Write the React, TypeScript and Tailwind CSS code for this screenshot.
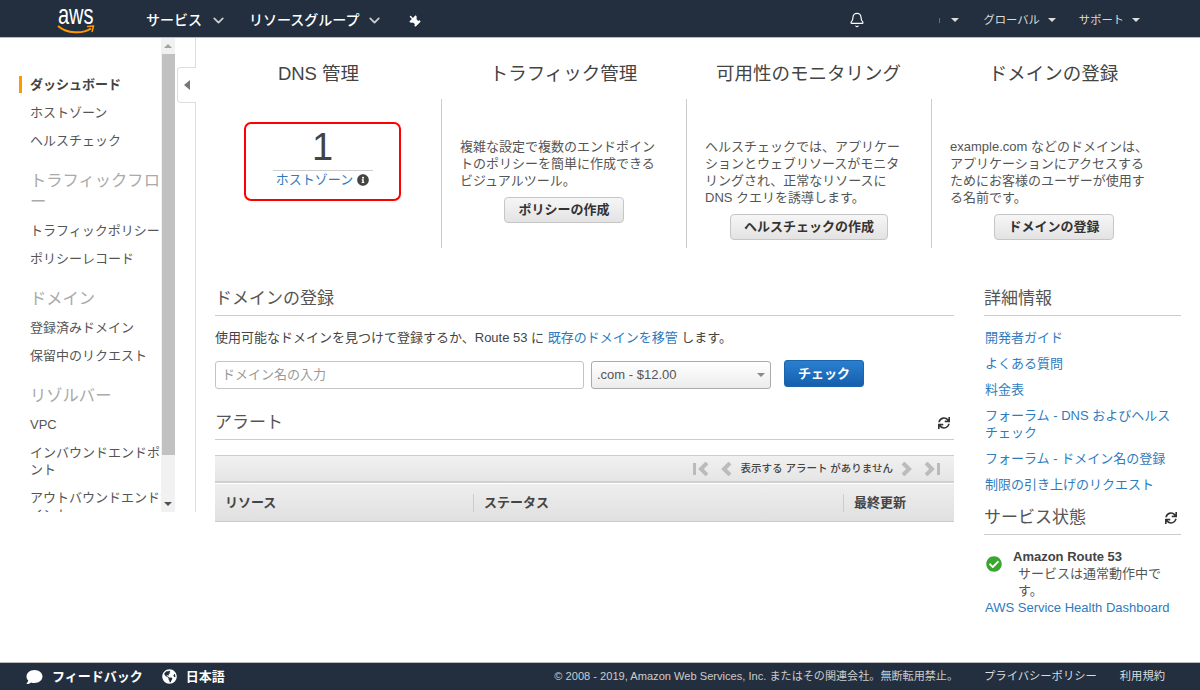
import { Bell, ChevronDown } from "lucide-react";
import {
  FaCheckCircle,
  FaComment,
  FaGlobeAmericas,
  FaInfoCircle,
  FaSync,
  FaThumbtack,
} from "react-icons/fa";

const fontStack = "font-['Liberation_Sans','Noto_Sans_CJK_JP',sans-serif]";

function Caret({ className }: { className: string }) {
  return <span className={`h-0 w-0 border-x-[4px] border-t-[4px] border-x-transparent ${className}`} />;
}

function NavItem({ label, active }: { label: string; active?: boolean }) {
  return (
    <div className="w-[154px] pt-[5px] pb-[6px] text-[13px] leading-[17px] [line-break:anywhere]">
      <div className={active ? "border-l-[3px] border-[#ff9900] pl-[8px] font-bold text-[#444]" : "pl-[11px] text-[#555]"}>
        {label}
      </div>
    </div>
  );
}

function NavHeading({ label }: { label: string }) {
  return (
    <div className="mt-[15px] mb-[5px] w-[154px] pl-[11px] text-[16.3px] leading-[21px] text-[#aaa] [line-break:anywhere]">
      {label}
    </div>
  );
}

function Sidebar() {
  return (
    <aside className="relative flex h-[474px] w-[196px] shrink-0 border-r border-[#ddd]">
      <nav className="h-full w-[161px] shrink-0 overflow-hidden pt-[33px] pl-[19px]">
        <NavItem label="ダッシュボード" active />
        <NavItem label="ホストゾーン" />
        <NavItem label="ヘルスチェック" />
        <NavHeading label="トラフィックフロー" />
        <NavItem label="トラフィックポリシー" />
        <NavItem label="ポリシーレコード" />
        <NavHeading label="ドメイン" />
        <NavItem label="登録済みドメイン" />
        <NavItem label="保留中のリクエスト" />
        <NavHeading label="リゾルバー" />
        <NavItem label="VPC" />
        <NavItem label="インバウンドエンドポイント" />
        <NavItem label="アウトバウンドエンドポイント" />
      </nav>
      {/* scrollbar */}
      <div className="flex h-full w-[14px] shrink-0 flex-col items-center bg-[#f1f1f1]">
        <div className="flex h-[16px] items-center justify-center">
          <span className="h-0 w-0 border-x-[4px] border-b-[4px] border-x-transparent border-b-[#a3a3a3]" />
        </div>
        <div className="h-[401px] w-[13px] bg-[#c1c1c1]" />
        <div className="flex flex-1 items-end pb-[6px]">
          <Caret className="border-t-[#505050]" />
        </div>
      </div>
      {/* collapse tab */}
      <div className="absolute top-[29px] left-[177px] flex h-[36px] w-[19px] items-center justify-center rounded-l-[4px] border border-r-0 border-[#ddd] bg-white">
        <span className="h-0 w-0 border-y-[5px] border-r-[6px] border-y-transparent border-r-[#777]" />
      </div>
    </aside>
  );
}

function GrayButton({ label }: { label: string }) {
  return (
    <button className="h-[26px] rounded-[4px] border border-[#c6c6c6] bg-gradient-to-b from-[#f6f6f6] to-[#e3e3e3] px-[13px] text-[13px] leading-[24px] font-bold text-[#333]">
      {label}
    </button>
  );
}

function FeatureColumn({ title, lines, button }: { title: string; lines: string[]; button: string }) {
  return (
    <div className="flex flex-col">
      <h2 className="flex h-[61px] items-center justify-center pt-[11px] text-[18.5px] font-normal text-[#444]">{title}</h2>
      <div className="flex h-[149px] flex-col border-l border-[#ccc] pt-[39px]">
        <p className="pl-[18px] text-[13px] leading-[17px] text-[#555]">
          {lines.map((line) => (
            <span key={line} className="block whitespace-nowrap">
              {line}
            </span>
          ))}
        </p>
        <div className="mt-[8px] flex justify-center">
          <GrayButton label={button} />
        </div>
      </div>
    </div>
  );
}

function SectionTitle({ title, refresh }: { title: string; refresh?: boolean }) {
  return (
    <div className="flex h-[29px] items-center justify-between border-b border-[#ccc] pb-[5px]">
      <h3 className="text-[17px] leading-[20px] font-normal text-[#555]">{title}</h3>
      {refresh && <FaSync className="mr-[4px] h-[12px] w-[12px] text-[#333]" />}
    </div>
  );
}

function Pager({ flip }: { flip?: boolean }) {
  return (
    <div className={`flex items-center gap-[12px] ${flip ? "flex-row-reverse" : ""}`}>
      <svg width="16" height="14" viewBox="0 0 16 14" className={flip ? "-scale-x-100" : ""}>
        <rect x="1" y="1" width="3" height="12" fill="#bbb" />
        <path d="M15 1 L9 7 L15 13" fill="none" stroke="#bbb" strokeWidth="4" />
      </svg>
      <svg width="12" height="14" viewBox="0 0 12 14" className={flip ? "-scale-x-100" : ""}>
        <path d="M10 1 L4 7 L10 13" fill="none" stroke="#bbb" strokeWidth="4" />
      </svg>
    </div>
  );
}

const links = [
  "開発者ガイド",
  "よくある質問",
  "料金表",
  "フォーラム - DNS およびヘルスチェック",
  "フォーラム - ドメイン名の登録",
  "制限の引き上げのリクエスト",
];

export default function App() {
  return (
    <div className={`flex h-[690px] w-[1200px] flex-col overflow-hidden bg-white ${fontStack}`}>
      {/* Top bar */}
      <header className="flex h-[38px] shrink-0 items-center border-b border-[#bbb] bg-[#232f3e] pt-[3px] text-white">
        <div className="relative ml-[57px] h-[34px] w-[38px]">
          <span className="absolute top-0 left-[1px] origin-center scale-y-[1.35] text-[20px] leading-[24px] text-white">aws</span>
          <svg width="38" height="10" viewBox="0 0 38 10" className="absolute top-[21px] left-0">
            <path d="M1 2 C10 10 26 10 34 4.5" fill="none" stroke="#ff9900" strokeWidth="2" />
            <path d="M30 2.5 L36.5 2 L35 8" fill="none" stroke="#ff9900" strokeWidth="1.5" />
          </svg>
        </div>
        <span className="ml-[51px] text-[14px] font-medium">サービス</span>
        <ChevronDown className="ml-[8px] h-[17px] w-[17px] text-[#ccc]" strokeWidth={2.5} />
        <span className="ml-[22px] text-[14px] font-medium">リソースグループ</span>
        <ChevronDown className="ml-[7px] h-[17px] w-[17px] text-[#ccc]" strokeWidth={2.5} />
        <FaThumbtack className="ml-[25px] h-[12px] w-[12px] rotate-[135deg] text-white" />
        <Bell className="ml-[429px] h-[16px] w-[16px] text-white" strokeWidth={1.75} />
        <span className="ml-[74px] h-[5px] w-px bg-[#8a6a3f]" />
        <Caret className="ml-[11px] border-t-[#ddd]" />
        <span className="ml-[24px] text-[11.3px] text-[#ddd]">グローバル</span>
        <Caret className="ml-[8px] border-t-[#ddd]" />
        <span className="ml-[23px] text-[11.3px] text-[#ddd]">サポート</span>
        <Caret className="ml-[8px] border-t-[#ddd]" />
      </header>

      <div className="flex flex-1 items-start">
        <Sidebar />

        <main className="min-w-0 flex-1">
          {/* Feature columns */}
          <div className="grid w-[980px] grid-cols-4">
            <div className="flex flex-col">
              <h2 className="flex h-[61px] items-center justify-center pt-[11px] text-[18.5px] font-normal text-[#444]">DNS 管理</h2>
              <div className="mt-[23px] ml-[48px] flex h-[79px] w-[157px] flex-col items-center rounded-[7px] border-2 border-[#f00]">
                <div className="h-[47px] w-[100px] border-b border-[#ccc] text-center text-[38px] leading-[46px] text-[#444]">1</div>
                <div className="flex items-center gap-[4px] text-[13px] leading-[18px] text-[#2f7bbd]">
                  ホストゾーン
                  <FaInfoCircle className="h-[12px] w-[12px] text-[#444]" />
                </div>
              </div>
            </div>
            <FeatureColumn
              title="トラフィック管理"
              lines={["複雑な設定で複数のエンドポイン", "トのポリシーを簡単に作成できる", "ビジュアルツール。"]}
              button="ポリシーの作成"
            />
            <FeatureColumn
              title="可用性のモニタリング"
              lines={["ヘルスチェックでは、アプリケー", "ションとウェブリソースがモニタ", "リングされ、正常なリソースに", "DNS クエリを誘導します。"]}
              button="ヘルスチェックの作成"
            />
            <FeatureColumn
              title="ドメインの登録"
              lines={["example.com などのドメインは、", "アプリケーションにアクセスする", "ためにお客様のユーザーが使用す", "る名前です。"]}
              button="ドメインの登録"
            />
          </div>

          <div className="mt-[39px] flex gap-[30px] pl-[19px]">
            {/* Left column */}
            <div className="w-[739px] shrink-0">
              <SectionTitle title="ドメインの登録" />
              <p className="mt-[13px] text-[13px] leading-[17px] text-[#444]">
                使用可能なドメインを見つけて登録するか、Route 53 に <span className="text-[#2f7bbd]">既存のドメインを移管</span> します。
              </p>
              <div className="mt-[14px] flex items-start">
                <div className="mt-[1px] flex h-[28px] w-[369px] items-center rounded-[3px] border border-[#c4c4c4] pl-[6px] text-[13px] text-[#999]">
                  ドメイン名の入力
                </div>
                <div className="mt-[1px] ml-[7px] flex h-[28px] w-[180px] items-center justify-between rounded-[3px] border border-[#aaa] bg-gradient-to-b from-white to-[#ececec] pr-[5px] pl-[5px] text-[13px] text-[#555]">
                  .com - $12.00
                  <Caret className="border-t-[#888]" />
                </div>
                <button className="ml-[13px] h-[27px] w-[80px] rounded-[3px] border border-[#1a65ac] bg-gradient-to-b from-[#2b7fd0] to-[#145fae] text-[13px] font-bold text-white">
                  チェック
                </button>
              </div>

              <div className="mt-[22px]">
                <SectionTitle title="アラート" refresh />
              </div>

              <div className="mt-[15px] border-t border-[#ccc]">
                <div className="flex h-[27px] items-center justify-end gap-[8px] border-b-2 border-[#d0d0d0] bg-gradient-to-b from-[#f1f1f1] to-[#e5e5e5] pr-[13px]">
                  <Pager />
                  <span className="text-[10.5px] font-medium text-[#444]">表示する アラート がありません</span>
                  <Pager flip />
                </div>
                <div className="mt-[1px] flex h-[38px] items-center border-b border-[#ccc] bg-gradient-to-b from-[#eeeeee] to-[#e0e0e0] text-[13px] font-bold text-[#444]">
                  <div className="w-[258px] pl-[10px]">リソース</div>
                  <div className="h-[18px] w-[370px] border-l border-[#ccc] pl-[10px] leading-[18px]">ステータス</div>
                  <div className="h-[18px] flex-1 border-l border-[#ccc] pl-[10px] leading-[18px]">最終更新</div>
                </div>
              </div>
            </div>

            {/* Right column */}
            <div className="w-[197px] shrink-0">
              <SectionTitle title="詳細情報" />
              <ul className="mt-[13px] flex flex-col gap-[9px] pl-[1px] text-[13px] leading-[17px] text-[#2f7bbd]">
                {links.map((link) => (
                  <li key={link}>{link}</li>
                ))}
              </ul>
              <div className="mt-[13px]">
                <SectionTitle title="サービス状態" refresh />
              </div>
              <div className="mt-[13px] flex">
                <FaCheckCircle className="mt-[8px] ml-[2px] h-[16px] w-[16px] shrink-0 text-[#3aa62f]" />
                <div className="ml-[11px] w-[150px] text-[13px] leading-[17px] text-[#555]">
                  <div className="font-bold text-[#444]">Amazon Route 53</div>
                  <div className="pl-[5px]">サービスは通常動作中です。</div>
                </div>
              </div>
              <div className="pl-[1px] text-[13px] leading-[17px] text-[#2f7bbd]">AWS Service Health Dashboard</div>
            </div>
          </div>
        </main>
      </div>

      {/* Footer */}
      <footer className="flex h-[28px] shrink-0 items-center border-t border-[#bbb] bg-[#232f3e] pr-[35px] whitespace-nowrap text-white">
        <FaComment className="ml-[26px] h-[16px] w-[17px]" />
        <span className="ml-[9px] text-[13px] font-bold">フィードバック</span>
        <FaGlobeAmericas className="ml-[19px] h-[15px] w-[15px]" />
        <span className="ml-[9px] text-[13px] font-bold">日本語</span>
        <span className="ml-auto text-[11.1px] text-[#ccc]">© 2008 - 2019, Amazon Web Services, Inc. またはその関連会社。無断転用禁止。</span>
        <span className="ml-[26px] text-[11.3px] text-[#ddd]">プライバシーポリシー</span>
        <span className="ml-[23px] text-[11.3px] text-[#ddd]">利用規約</span>
      </footer>
    </div>
  );
}
